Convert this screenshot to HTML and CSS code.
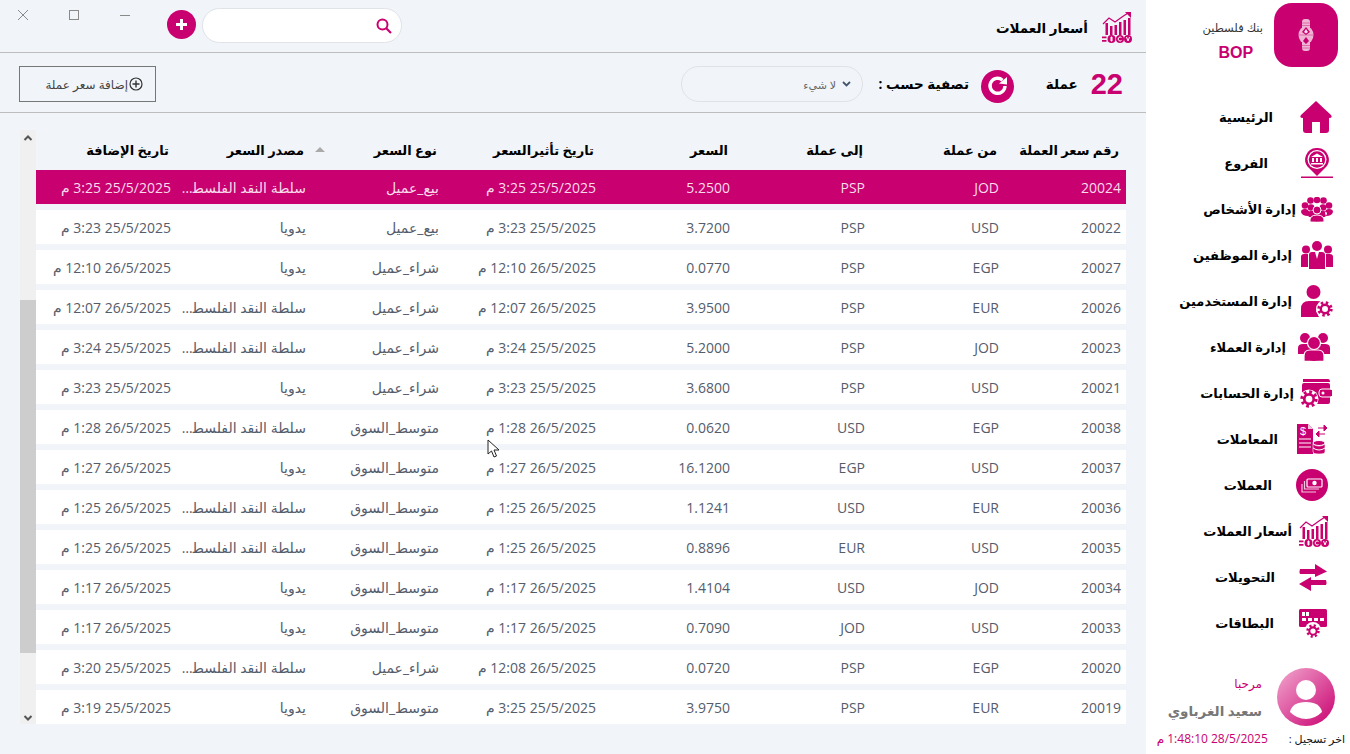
FILE: index.html
```html
<!DOCTYPE html>
<html lang="ar" dir="rtl">
<head>
    <meta charset="UTF-8">
    <title>أسعار العملات</title>
    <link rel="stylesheet" href="styles.css">
</head>
<body>

    <svg class="defs" width="0" height="0">
        <symbol id="ic-rates" viewBox="0 0 30 31">
            <path d="M1 12 L7 6 L13 10 L20 5 L26 1" fill="none" stroke="#c9006f" stroke-width="1.200"/>
            <path d="M23 0 H29 V6 Z" fill="#c9006f"/>
            <path d="M3.500 11h2.500v12H3.500zM8 14h2.500v9H8zM12.500 13h2.500v10h-2.500zM17 10h2.500v13H17zM21.500 8h2.500v15h-2.500zM26 6h2.500v17H26z" fill="#c9006f"/>
            <path d="M0 24.500h4.500v1.800H0zM0 28h4.500v1.800H0z" fill="#c9006f"/>
            <circle cx="9.500" cy="27" r="4" fill="#c9006f"/>
            <circle cx="18" cy="27" r="4" fill="#c9006f"/>
            <circle cx="26" cy="27" r="4" fill="#c9006f"/>
            <path d="M9.500 24.500v5M8 26h3M8 28h3M19.500 25.500a2 2 0 1 0 0 3M24.500 25l1.500 4 1.500-4" fill="none" stroke="#fff" stroke-width="1"/>
        </symbol>
        <symbol id="ic-gear" viewBox="0 0 16 16">
            <circle cx="8" cy="8" r="6.200" fill="none" stroke="currentColor" stroke-width="3" stroke-dasharray="2.400 2.470"/>
            <circle cx="8" cy="8" r="4.200" fill="none" stroke="currentColor" stroke-width="2.400"/>
        </symbol>
    </svg>

    <div class="app">

        <aside class="sidebar">
            <div class="brand">
                <div class="brand-logo">
                    <svg width="16" height="34" viewBox="0 0 16 34">
                        <ellipse cx="8" cy="17" rx="7.500" ry="9" fill="#eeb4d4"/>
                        <rect x="4" y="1" width="8" height="32" rx="3" fill="#eeb4d4"/>
                        <path d="M8 9 L12 14 L8 17 L4 14 Z M8 19 L11 23 L8 26 L5 23 Z" fill="#c9006f"/>
                        <path d="M8 11 L10 14 L8 15.500 L6 14 Z" fill="#f7dcec"/>
                        <path d="M4.500 5h7M4.500 7.500h7M4.500 27.500h7M4.500 30h7" stroke="#c9006f" stroke-width="0.800" stroke-dasharray="1 1"/>
                        <path d="M1.500 17h13" stroke="#c9006f" stroke-width="0.800" stroke-dasharray="1 1"/>
                    </svg>
                </div>
                <div class="brand-text">
                    <div class="brand-name">بنك فلسطين</div>
                    <div class="brand-code">BOP</div>
                </div>
            </div>

            <nav class="nav">
                <a class="nav-item nav-home">
                    <span class="nav-icon">
                        <svg width="32" height="32" viewBox="0 0 32 32"><path d="M16 0 L31 14 Q33 17 29 17 L29 29 Q29 32 26 32 L20 32 L20 21 L12 21 L12 32 L6 32 Q3 32 3 29 L3 17 Q-1 17 1 14 Z" fill="#c9006f"/></svg>
                    </span>
                    <span class="nav-label">الرئيسية</span>
                </a>
                <a class="nav-item nav-branches">
                    <span class="nav-icon">
                        <svg width="32" height="30" viewBox="0 0 32 30">
                            <path d="M16 0 A11.500 11.500 0 0 1 24 20 L16 28 L8 20 A11.500 11.500 0 0 1 16 0 Z" fill="#c9006f"/>
                            <circle cx="16" cy="11.500" r="9.500" fill="#fff"/>
                            <circle cx="16" cy="11.500" r="8.200" fill="#c9006f"/>
                            <path d="M16 5.500 L22 9 H10 Z M11 10h2v4h-2zM15 10h2v4h-2zM19 10h2v4h-2zM10 15h12v1.500H10z" fill="#fff"/>
                            <rect x="0" y="28.500" width="32" height="1.500" fill="#c9006f"/>
                        </svg>
                    </span>
                    <span class="nav-label">الفروع</span>
                </a>
                <a class="nav-item nav-persons">
                    <span class="nav-icon">
                        <svg width="32" height="25" viewBox="0 0 32 25" fill="#c9006f">
                            <circle cx="9.500" cy="3.500" r="3.300"/><circle cx="16" cy="3" r="3.300"/><circle cx="22.500" cy="3.500" r="3.300"/>
                            <circle cx="4" cy="8.500" r="3.300"/><circle cx="28" cy="8.500" r="3.300"/>
                            <circle cx="10" cy="10.500" r="3.300"/><circle cx="22" cy="10.500" r="3.300"/>
                            <path d="M0 15 Q0 12 4 12 Q8 12 8 16 L7 19 Q1 19 0 15 Z M32 15 Q32 12 28 12 Q24 12 24 16 L25 19 Q31 19 32 15 Z M6 17 Q6 14 10 14 H22 Q26 14 26 17 L24 20 H8 Z"/>
                            <circle cx="16" cy="13" r="4" stroke="#fff" stroke-width="1"/>
                            <path d="M9 25 Q8 18 16 18 Q24 18 23 25 Q16 25.500 9 25 Z" stroke="#fff" stroke-width="1"/>
                        </svg>
                    </span>
                    <span class="nav-label">إدارة الأشخاص</span>
                </a>
                <a class="nav-item nav-staff">
                    <span class="nav-icon">
                        <svg width="32" height="28" viewBox="0 0 32 28" fill="#c9006f">
                            <circle cx="16" cy="5" r="5"/><circle cx="5" cy="8.500" r="4"/><circle cx="27" cy="8.500" r="4"/>
                            <path d="M0 16 Q0 13 3 13 H7 V26 H0 Z M32 16 Q32 13 29 13 H25 V26 H32 Z"/>
                            <path d="M8 14 Q8 11 11 11 H21 Q24 11 24 14 V28 H8 Z"/>
                            <path d="M14 11 L16 18 L18 11 Z" fill="#fff"/>
                        </svg>
                    </span>
                    <span class="nav-label">إدارة الموظفين</span>
                </a>
                <a class="nav-item nav-users">
                    <span class="nav-icon">
                        <svg width="32" height="32" viewBox="0 0 32 32">
                            <circle cx="12.500" cy="7" r="7" fill="#c9006f"/>
                            <path d="M0 32 V24 Q0 16 8 16 H16 Q19 16 20 17 L15 26 L18 32 Z" fill="#c9006f"/>
                            <circle cx="24" cy="24" r="9" fill="#fff"/>
                            <use href="#ic-gear" x="16" y="16" width="16" height="16" class="gear"/>
                        </svg>
                    </span>
                    <span class="nav-label">إدارة المستخدمين</span>
                </a>
                <a class="nav-item nav-clients">
                    <span class="nav-icon">
                        <svg width="32" height="28" viewBox="0 0 32 28" fill="#c9006f">
                            <circle cx="7" cy="5" r="5"/><circle cx="25" cy="5" r="5"/>
                            <path d="M0 21 V15 Q0 11 5 11 H27 Q32 11 32 15 V21 Z"/>
                            <circle cx="16" cy="10" r="6.500" stroke="#fff" stroke-width="1.200"/>
                            <path d="M6 28 V23 Q6 17 12 17 H20 Q26 17 26 23 V28 Q16 29 6 28 Z" stroke="#fff" stroke-width="1.200"/>
                        </svg>
                    </span>
                    <span class="nav-label">إدارة العملاء</span>
                </a>
                <a class="nav-item nav-accounts">
                    <span class="nav-icon">
                        <svg width="32" height="29" viewBox="0 0 32 29">
                            <path d="M3 0 H28 Q30 0 30 3 H3 Z" fill="#c9006f"/>
                            <rect x="2" y="4" width="28" height="21" rx="2" fill="#c9006f"/>
                            <rect x="19" y="10" width="14" height="8" rx="3" fill="#c9006f" stroke="#fff" stroke-width="1"/>
                            <circle cx="23" cy="14" r="1.500" fill="#fff"/>
                            <circle cx="9" cy="20" r="9.500" fill="#fff"/>
                            <use href="#ic-gear" x="0" y="11" width="18" height="18" class="gear"/>
                        </svg>
                    </span>
                    <span class="nav-label">إدارة الحسابات</span>
                </a>
                <a class="nav-item nav-trans">
                    <span class="nav-icon">
                        <svg width="32" height="30" viewBox="0 0 32 30">
                            <path d="M0 0 H11 L16 5 V30 H0 Z" fill="#c9006f"/>
                            <path d="M11 0 L16 5 H11 Z" fill="#f3c6df"/>
                            <path d="M2 15h12M2 19h12M2 23h12" stroke="#fff" stroke-width="1.200"/>
                            <text x="3" y="11" class="doc-sign">$</text>
                            <ellipse cx="22" cy="19" rx="6" ry="2.500" fill="#c9006f" stroke="#fff"/>
                            <path d="M16 20 V28 Q16 30 22 30 Q28 30 28 28 V20 Q26 22 22 22 Q18 22 16 20 Z" fill="#c9006f" stroke="#fff" stroke-width="0.600"/>
                            <path d="M16 24 Q19 26 22 26 Q25 26 28 24" fill="none" stroke="#fff"/>
                            <path d="M21 4h7M30 4l-3-3v6zM21 10h7M19 10l3-3v6z" fill="#c9006f" stroke="#c9006f" stroke-width="1"/>
                        </svg>
                    </span>
                    <span class="nav-label">المعاملات</span>
                </a>
                <a class="nav-item nav-currency">
                    <span class="nav-icon">
                        <svg width="32" height="32" viewBox="0 0 32 32">
                            <circle cx="16" cy="16" r="16" fill="#c9006f"/>
                            <rect x="11" y="10" width="15" height="8" rx="1" fill="#c9006f" stroke="#fff" stroke-width="1.200"/>
                            <circle cx="18.500" cy="14" r="2.200" fill="#fff"/>
                            <path d="M8.500 12 V20 H23 M6 15 V23 H20" fill="none" stroke="#f3c6df" stroke-width="1.200"/>
                        </svg>
                    </span>
                    <span class="nav-label">العملات</span>
                </a>
                <a class="nav-item nav-rates">
                    <span class="nav-icon">
                        <svg width="30" height="31"><use href="#ic-rates"/></svg>
                    </span>
                    <span class="nav-label">أسعار العملات</span>
                </a>
                <a class="nav-item nav-transfers">
                    <span class="nav-icon">
                        <svg width="28" height="27" viewBox="0 0 28 27" fill="#c9006f">
                            <path d="M1 5 H16 V0 L28 7.500 L16 13 V10 H1 Q0 7.500 1 5 Z"/>
                            <path d="M27 16 H12 V13 L0 20 L12 27 V21 H27 Q28 18.500 27 16 Z"/>
                        </svg>
                    </span>
                    <span class="nav-label">التحويلات</span>
                </a>
                <a class="nav-item nav-cards">
                    <span class="nav-icon">
                        <svg width="28" height="29" viewBox="0 0 28 29">
                            <rect x="0" y="0" width="28" height="18" rx="1.500" fill="#c9006f"/>
                            <path d="M3 3h7v4H3zM3 9h4v3H3zM9 9h4v3H9zM15 9h4v3h-4zM21 9h4v3h-4z" fill="#fff"/>
                            <path d="M6.500 3v4" stroke="#c9006f"/>
                            <circle cx="14" cy="21" r="8" fill="#fff"/>
                            <use href="#ic-gear" x="7" y="15" width="14" height="14" class="gear"/>
                        </svg>
                    </span>
                    <span class="nav-label">البطاقات</span>
                </a>
            </nav>

            <div class="profile">
                <div class="profile-row">
                    <div class="avatar">
                        <svg width="58" height="58" viewBox="0 0 58 58">
                            <circle cx="29" cy="22" r="10" fill="#fff"/>
                            <path d="M13 44 Q15 34 29 34 Q43 34 45 44 Q38 51 29 51 Q20 51 13 44 Z" fill="#fff"/>
                        </svg>
                    </div>
                    <div class="profile-text">
                        <div class="hello">مرحبا</div>
                        <div class="user-name">سعيد الغرباوي</div>
                    </div>
                </div>
                <div class="last-login">
                    <span class="last-label">اخر تسجيل :</span>
                    <span class="last-date">28/5/2025 1:48:10 م</span>
                </div>
            </div>
        </aside>

        <main class="content">
            <header class="topbar">
                <div class="page-title">
                    <svg width="30" height="31"><use href="#ic-rates"/></svg>
                    <h1>أسعار العملات</h1>
                </div>
                <div class="top-tools">
                    <div class="search-box">
                        <svg class="search-icon" width="16" height="16" viewBox="0 0 16 16">
                            <circle cx="6.500" cy="6.500" r="5" fill="none" stroke="#c9006f" stroke-width="2"/>
                            <path d="M10 10 L15 15" stroke="#c9006f" stroke-width="2.200"/>
                        </svg>
                    </div>
                    <button class="btn-round">
                        <svg width="11" height="11" viewBox="0 0 11 11"><path d="M4 0h3v4h4v3H7v4H4V7H0V4h4z" fill="#fff"/></svg>
                    </button>
                    <div class="win-controls">
                        <svg width="12" height="12" viewBox="0 0 12 12"><path d="M1 6.500h10" stroke="#8a8a8a"/></svg>
                        <svg width="12" height="12" viewBox="0 0 12 12"><rect x="1.500" y="1.500" width="9" height="9" fill="none" stroke="#8a8a8a"/></svg>
                        <svg width="12" height="12" viewBox="0 0 12 12"><path d="M1 1 L11 11 M11 1 L1 11" stroke="#8a8a8a"/></svg>
                    </div>
                </div>
            </header>

            <section class="filter-bar">
                <div class="count"><span class="count-num">22</span><span class="count-word">عملة</span></div>
                <button class="btn-refresh">
                    <svg width="22" height="22" viewBox="0 0 22 22">
                        <path d="M18 11 A7.500 7.500 0 1 1 15.500 5.200" fill="none" stroke="#fff" stroke-width="3.400"/>
                        <path d="M12 8.500 L20 9.500 L20 2 Z" fill="#fff"/>
                    </svg>
                </button>
                <span class="filter-label">تصفية حسب :</span>
                <div class="filter-select">
                    <svg width="9" height="6" viewBox="0 0 9 6"><path d="M1 1 L4.500 4.500 L8 1" fill="none" stroke="#45566b" stroke-width="1.800"/></svg>
                    <span>لا شيء</span>
                </div>
                <button class="btn-add">
                    <svg width="14" height="14" viewBox="0 0 14 14">
                        <circle cx="7" cy="7" r="6" fill="none" stroke="#333" stroke-width="1.200"/>
                        <path d="M7 3.500v7M3.500 7h7" stroke="#333" stroke-width="1.400"/>
                    </svg>
                    <span>إضافة سعر عملة</span>
                </button>
            </section>

            <section class="grid-wrap">
                <div class="table-box">
                    <table class="rates-table">
                        <colgroup>
                            <col class="c-id"><col class="c-from"><col class="c-to"><col class="c-price">
                            <col class="c-effect"><col class="c-type"><col class="c-source"><col class="c-added">
                        </colgroup>
                        <thead>
                            <tr>
                                <th>رقم سعر العملة</th>
                                <th>من عملة</th>
                                <th>إلى عملة</th>
                                <th>السعر</th>
                                <th>تاريخ تأثيرالسعر</th>
                                <th>نوع السعر</th>
                                <th class="sorted">مصدر السعر</th>
                                <th>تاريخ الإضافة</th>
                            </tr>
                        </thead>
                        <tbody>
                            <tr class="selected"><td>20024</td><td>JOD</td><td>PSP</td><td>5.2500</td><td>25/5/2025 3:25 م</td><td>بيع_عميل</td><td>سلطة النقد الفلسطينية</td><td>25/5/2025 3:25 م</td></tr>
                            <tr><td>20022</td><td>USD</td><td>PSP</td><td>3.7200</td><td>25/5/2025 3:23 م</td><td>بيع_عميل</td><td>يدويا</td><td>25/5/2025 3:23 م</td></tr>
                            <tr><td>20027</td><td>EGP</td><td>PSP</td><td>0.0770</td><td>26/5/2025 12:10 م</td><td>شراء_عميل</td><td>يدويا</td><td>26/5/2025 12:10 م</td></tr>
                            <tr><td>20026</td><td>EUR</td><td>PSP</td><td>3.9500</td><td>26/5/2025 12:07 م</td><td>شراء_عميل</td><td>سلطة النقد الفلسطينية</td><td>26/5/2025 12:07 م</td></tr>
                            <tr><td>20023</td><td>JOD</td><td>PSP</td><td>5.2000</td><td>25/5/2025 3:24 م</td><td>شراء_عميل</td><td>سلطة النقد الفلسطينية</td><td>25/5/2025 3:24 م</td></tr>
                            <tr><td>20021</td><td>USD</td><td>PSP</td><td>3.6800</td><td>25/5/2025 3:23 م</td><td>شراء_عميل</td><td>يدويا</td><td>25/5/2025 3:23 م</td></tr>
                            <tr><td>20038</td><td>EGP</td><td>USD</td><td>0.0620</td><td>26/5/2025 1:28 م</td><td>متوسط_السوق</td><td>سلطة النقد الفلسطينية</td><td>26/5/2025 1:28 م</td></tr>
                            <tr><td>20037</td><td>USD</td><td>EGP</td><td>16.1200</td><td>26/5/2025 1:27 م</td><td>متوسط_السوق</td><td>يدويا</td><td>26/5/2025 1:27 م</td></tr>
                            <tr><td>20036</td><td>EUR</td><td>USD</td><td>1.1241</td><td>26/5/2025 1:25 م</td><td>متوسط_السوق</td><td>سلطة النقد الفلسطينية</td><td>26/5/2025 1:25 م</td></tr>
                            <tr><td>20035</td><td>USD</td><td>EUR</td><td>0.8896</td><td>26/5/2025 1:25 م</td><td>متوسط_السوق</td><td>سلطة النقد الفلسطينية</td><td>26/5/2025 1:25 م</td></tr>
                            <tr><td>20034</td><td>JOD</td><td>USD</td><td>1.4104</td><td>26/5/2025 1:17 م</td><td>متوسط_السوق</td><td>يدويا</td><td>26/5/2025 1:17 م</td></tr>
                            <tr><td>20033</td><td>USD</td><td>JOD</td><td>0.7090</td><td>26/5/2025 1:17 م</td><td>متوسط_السوق</td><td>يدويا</td><td>26/5/2025 1:17 م</td></tr>
                            <tr><td>20020</td><td>EGP</td><td>PSP</td><td>0.0720</td><td>26/5/2025 12:08 م</td><td>شراء_عميل</td><td>سلطة النقد الفلسطينية</td><td>25/5/2025 3:20 م</td></tr>
                            <tr><td>20019</td><td>EUR</td><td>PSP</td><td>3.9750</td><td>25/5/2025 3:25 م</td><td>متوسط_السوق</td><td>يدويا</td><td>25/5/2025 3:19 م</td></tr>
                        </tbody>
                    </table>
                </div>
                <div class="scrollbar">
                    <svg width="10" height="7" viewBox="0 0 10 7"><path d="M1.500 5 L5 1.500 L8.500 5" fill="none" stroke="#555" stroke-width="2"/></svg>
                    <div class="scroll-thumb"></div>
                    <svg width="10" height="7" viewBox="0 0 10 7"><path d="M1.500 2 L5 5.500 L8.500 2" fill="none" stroke="#555" stroke-width="2"/></svg>
                </div>
            </section>
        </main>
    </div>

    <!-- mouse pointer caught in the screenshot -->
    <svg class="mouse-pointer" width="14" height="20" viewBox="0 0 14 20">
        <path d="M1 1 V15 L4.500 12 L7 18 L9.500 17 L7 11 H12 Z" fill="#fff" stroke="#222" stroke-width="1"/>
    </svg>

</body>
</html>
```

FILE: styles.css
```css
* {
    box-sizing: border-box;
}
html, body {
    margin: 0;
    height: 100%;
    overflow: hidden;
}
body {
    font-family: "Open Sans", "DejaVu Sans", sans-serif;
    background-color: #f1f5fa;
    color: #000;
}
.defs {
    position: absolute;
}
.app {
    display: flex;
    height: 754px;
}

/* sidebar */
.sidebar {
    width: 204px;
    flex: none;
    background-color: #fff;
    display: flex;
    flex-direction: column;
}
.brand {
    display: flex;
    align-items: center;
    height: 64px;
    margin-top: 3px;
    padding-right: 12px;
}
.brand-logo {
    width: 64px;
    height: 64px;
    border-radius: 18px;
    background-color: #c9006f;
    display: flex;
    align-items: center;
    justify-content: center;
}
.brand-text {
    margin-right: 11px;
    margin-top: 12px;
    text-align: center;
}
.brand-name {
    font-size: 11.5px;
    color: #333;
}
.brand-code {
    font-family: "Liberation Sans", sans-serif;
    font-size: 16px;
    font-weight: bold;
    color: #c9006f;
    margin-top: 9px;
    padding-left: 6px;
}
.nav {
    margin-top: 27px;
}
.nav-item {
    display: flex;
    align-items: center;
    height: 46px;
    padding-right: 16px;
}
.nav-icon {
    width: 38px;
    flex: none;
    display: flex;
    padding-right: var(--icon-in);
}
.nav-label {
    font-size: 13px;
    font-weight: bold;
    white-space: nowrap;
    padding-right: var(--label-in);
}
.nav-home { --icon-in: 2px; --label-in: 23px; }
.nav-branches { --icon-in: 1px; --label-in: 28px; }
.nav-persons { --icon-in: 1px; --label-in: 0; }
.nav-staff { --icon-in: 1px; --label-in: 4px; }
.nav-users { --icon-in: 1px; --label-in: 4px; }
.nav-clients { --icon-in: 4px; --label-in: 10px; }
.nav-accounts { --icon-in: 2px; --label-in: 2px; }
.nav-trans { --icon-in: 5px; --label-in: 18px; }
.nav-currency { --icon-in: 6px; --label-in: 24px; }
.nav-rates { --icon-in: 5px; --label-in: 4px; }
.nav-transfers { --icon-in: 7px; --label-in: 21px; }
.nav-cards { --icon-in: 7px; --label-in: 22px; }
.gear {
    color: #c9006f;
}
.doc-sign {
    font-family: "Liberation Sans", sans-serif;
    font-size: 11px;
    fill: #fff;
    direction: ltr;
}
.profile {
    margin-top: auto;
    padding-bottom: 7px;
}
.profile-row {
    display: flex;
    align-items: center;
    padding-right: 15px;
}
.avatar {
    width: 58px;
    height: 58px;
    border-radius: 50%;
    background: linear-gradient(135deg, #f2a9d0, #c9006f);
}
.profile-text {
    margin-right: 15px;
}
.hello {
    font-size: 12px;
    color: #c9006f;
}
.user-name {
    font-size: 13.500px;
    font-weight: bold;
    color: #777;
    margin-top: 10px;
}
.last-login {
    display: flex;
    align-items: center;
    margin-top: 4px;
    padding-right: 5px;
    font-size: 11px;
    white-space: nowrap;
}
.last-label {
    color: #111;
}
.last-date {
    margin-right: 21px;
    font-size: 12px;
    font-weight: 500;
    color: #c9006f;
}

/* top area */
.content {
    flex: 1;
    min-width: 0;
}
.topbar {
    display: flex;
    justify-content: space-between;
    align-items: flex-start;
    height: 53px;
    border-bottom: 1px solid #bdbdbd;
    padding-right: 14px;
}
.page-title {
    display: flex;
    align-items: center;
    margin-top: 12px;
}
.page-title h1 {
    margin: 0 14px 0 0;
    font-size: 13.500px;
    font-weight: bold;
}
.top-tools {
    display: flex;
    align-items: flex-start;
}
.search-box {
    width: 200px;
    height: 35px;
    margin-top: 8px;
    background-color: #fff;
    border: 1px solid #dfe3e8;
    border-radius: 18px;
    display: flex;
    align-items: center;
    padding-right: 9px;
}
.btn-round {
    width: 29px;
    height: 29px;
    margin: 10px 6px 0 0;
    padding: 0;
    border: none;
    border-radius: 50%;
    background-color: #c9006f;
    display: flex;
    align-items: center;
    justify-content: center;
}
.win-controls {
    display: flex;
    gap: 39px;
    margin: 9px 36px 0 17px;
}
.filter-bar {
    display: flex;
    align-items: center;
    height: 60px;
    border-bottom: 1px solid #bdbdbd;
    padding: 3px 23px 0 0;
}
.count {
    display: flex;
    align-items: center;
    width: 88px;
}
.count-num {
    font-family: "Liberation Sans", sans-serif;
    font-size: 29px;
    font-weight: bold;
    color: #c9006f;
}
.count-word {
    font-size: 13.500px;
    font-weight: bold;
    margin-right: 13px;
}
.btn-refresh {
    width: 33px;
    height: 33px;
    margin: 4px 21px 0 0;
    padding: 0;
    border: none;
    border-radius: 50%;
    background-color: #c9006f;
    display: flex;
    align-items: center;
    justify-content: center;
}
.filter-label {
    width: 91px;
    margin-right: 12px;
    font-size: 13.500px;
    font-weight: bold;
    white-space: nowrap;
}
.filter-select {
    width: 182px;
    height: 36px;
    margin-right: 15px;
    border: 1px solid #dfe3e8;
    border-radius: 18px;
    display: flex;
    align-items: center;
    gap: 6px;
    padding-right: 11px;
    font-size: 11px;
    color: #666;
}
.btn-add {
    width: 137px;
    height: 36px;
    margin-right: auto;
    margin-left: 19px;
    border: 1px solid #777;
    background: none;
    display: flex;
    align-items: center;
    gap: 1px;
    padding: 0 12px 0 0;
    font-family: inherit;
    font-size: 12px;
    color: #444;
}

/* table */
.grid-wrap {
    display: flex;
    margin: 17px 20px 0;
    height: 594px;
}
.table-box {
    width: 1090px;
    overflow: hidden;
}
.rates-table {
    width: 1090px;
    table-layout: fixed;
    border-collapse: separate;
    border-spacing: 0 6px;
    margin-top: -2px;
}
.c-id { width: 122px; }
.c-from { width: 134px; }
.c-to { width: 135px; }
.c-price { width: 134px; }
.c-effect { width: 157px; }
.c-type { width: 133px; }
.c-source { width: 135px; }
.c-added { width: 140px; }
.rates-table th {
    height: 30px;
    padding: 2px 7px 0 0;
    font-size: 13px;
    font-weight: bold;
    text-align: right;
    white-space: nowrap;
}
.rates-table th.sorted {
    position: relative;
}
.rates-table th.sorted::before {
    content: "";
    position: absolute;
    right: -14px;
    top: 13px;
    border-left: 5px solid transparent;
    border-right: 5px solid transparent;
    border-bottom: 5px solid #aaa;
}
.rates-table td {
    height: 34px;
    padding: 0 5px;
    background-color: #fff;
    color: #555c6b;
    font-size: 14px;
    text-align: right;
    white-space: nowrap;
    overflow: hidden;
    text-overflow: ellipsis;
}
.rates-table tr.selected td {
    background-color: #c9006f;
    color: #f8dcec;
}
.scrollbar {
    width: 16px;
    flex: none;
    background-color: #f0f0f0;
    display: flex;
    flex-direction: column;
    align-items: center;
    justify-content: space-between;
    padding: 5px 0 3px;
    position: relative;
}
.scroll-thumb {
    position: absolute;
    top: 170px;
    left: 0;
    width: 16px;
    height: 353px;
    background-color: #cdcdcd;
}
.mouse-pointer {
    position: absolute;
    left: 487px;
    top: 439px;
}
```
